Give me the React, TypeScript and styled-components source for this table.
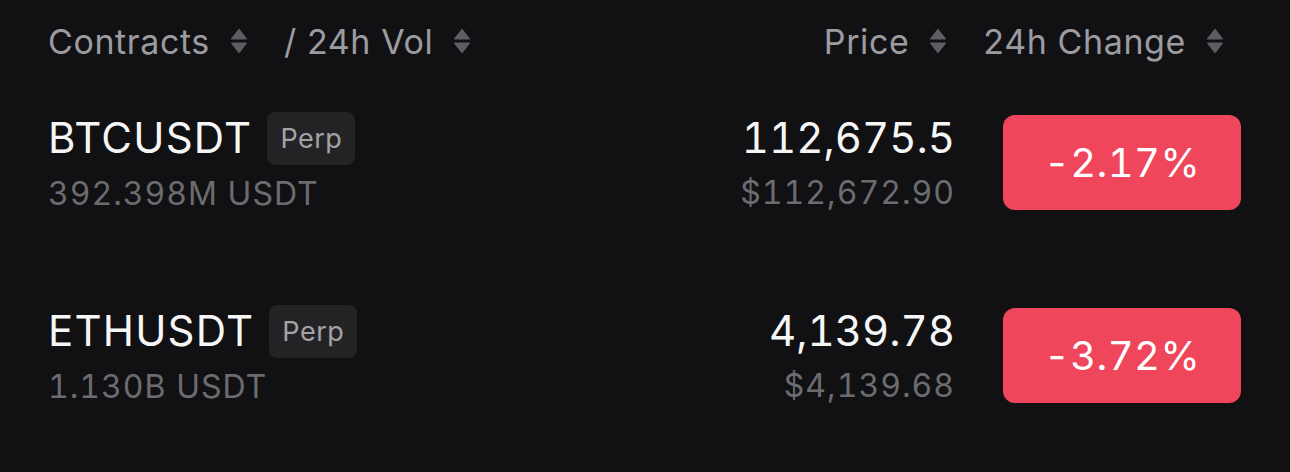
import React from "react";
import styled, { createGlobalStyle } from "styled-components";

const GlobalStyle = createGlobalStyle`
  html, body {
    margin: 0;
    padding: 0;
    background: #111113;
  }
  body {
    font-family: Inter, "Noto Sans", "Liberation Sans", sans-serif;
    -webkit-font-smoothing: antialiased;
  }
`;

interface Contract {
  symbol: string;
  volume: string;
  price: string;
  usdPrice: string;
  change: string;
}

const contracts: Contract[] = [
  {
    symbol: "BTCUSDT",
    volume: "392.398M USDT",
    price: "112,675.5",
    usdPrice: "$112,672.90",
    change: "-2.17%"
  },
  {
    symbol: "ETHUSDT",
    volume: "1.130B USDT",
    price: "4,139.78",
    usdPrice: "$4,139.68",
    change: "-3.72%"
  }
];

const SortIcon = () => (
  <SortSvg viewBox="0 0 18 28" width="18" height="28">
    <path d="M9 1.5 L16.8 11.4 Q17.4 12.6 16 12.6 L2 12.6 Q0.6 12.6 1.2 11.4 Z" />
    <path d="M9 26.5 L16.8 16.6 Q17.4 15.4 16 15.4 L2 15.4 Q0.6 15.4 1.2 16.6 Z" />
  </SortSvg>
);

const App = () => {
  return (
    <>
      <GlobalStyle />
      <Page>
        <HeaderRow>
          <HeaderGroup>
            <HeaderCell>
              Contracts
              <SortIcon />
            </HeaderCell>
            <HeaderCell>
              / 24h Vol
              <SortIcon />
            </HeaderCell>
          </HeaderGroup>

          <HeaderGroup>
            <HeaderCell>
              Price
              <SortIcon />
            </HeaderCell>
            <HeaderCell>
              24h Change
              <SortIcon />
            </HeaderCell>
          </HeaderGroup>
        </HeaderRow>

        {contracts.map((c) => (
          <ContractRow key={c.symbol}>
            <NameCell>
              <SymbolLine>
                <Symbol>{c.symbol}</Symbol>
                <Tag>Perp</Tag>
              </SymbolLine>
              <SubText>{c.volume}</SubText>
            </NameCell>

            <PriceCell>
              <Price>{c.price}</Price>
              <SubText>{c.usdPrice}</SubText>
            </PriceCell>

            <ChangeBadge negative={c.change.startsWith("-")}>
              {c.change}
            </ChangeBadge>
          </ContractRow>
        ))}
      </Page>
    </>
  );
};

const Page = styled.div`
  width: 1290px;
  height: 472px;
  box-sizing: border-box;
  padding: 0 49px 0 48px;
  background: #111113;
  overflow: hidden;
`;

const HeaderRow = styled.div`
  display: flex;
  justify-content: space-between;
  align-items: center;
  height: 82px;
  padding-right: 17px;
`;

const HeaderGroup = styled.div`
  display: flex;
  align-items: center;
  gap: 36px;
`;

const HeaderCell = styled.div`
  display: flex;
  align-items: center;
  gap: 20px;
  color: #9c9ca0;
  font-size: 34px;
  letter-spacing: 0.6px;
`;

const SortSvg = styled.svg`
  fill: #5e5e62;
  flex-shrink: 0;
`;

const ContractRow = styled.div`
  display: grid;
  grid-template-columns: 1fr auto 238px;
  column-gap: 51px;
  align-items: center;
  height: 193px;
  margin-top: -16px;
  margin-bottom: 16px;
`;

const NameCell = styled.div`
  display: flex;
  flex-direction: column;
  gap: 10px;
`;

const SymbolLine = styled.div`
  display: flex;
  align-items: center;
  gap: 15px;
`;

const Symbol = styled.span`
  color: #f6f6f7;
  font-size: 42px;
  font-weight: 400;
  letter-spacing: 1.2px;
  line-height: 1.2;
`;

const Tag = styled.span`
  display: inline-flex;
  align-items: center;
  height: 53px;
  padding: 0 13px;
  border-radius: 8px;
  background: #232326;
  color: #a3a3a7;
  font-size: 27px;
  letter-spacing: 0.5px;
`;

const SubText = styled.span`
  color: #6c6c70;
  font-size: 32px;
  letter-spacing: 1px;
  line-height: 1.2;
  font-variant-numeric: tabular-nums;
`;

const PriceCell = styled.div`
  display: flex;
  flex-direction: column;
  align-items: flex-end;
  gap: 10px;
  margin-right: -3px;
`;

const Price = styled.span`
  color: #f6f6f7;
  font-size: 42px;
  font-weight: 400;
  letter-spacing: 0px;
  line-height: 1.2;
  font-variant-numeric: tabular-nums;
`;

const ChangeBadge = styled.div<{ negative: boolean }>`
  display: flex;
  align-items: center;
  justify-content: center;
  height: 95px;
  border-radius: 12px;
  background: ${p => (p.negative ? "#ef465b" : "#22b573")};
  color: #ffffff;
  font-size: 40px;
  font-weight: 400;
  letter-spacing: 0.4px;
  font-variant-numeric: tabular-nums;
`;

export default App;
